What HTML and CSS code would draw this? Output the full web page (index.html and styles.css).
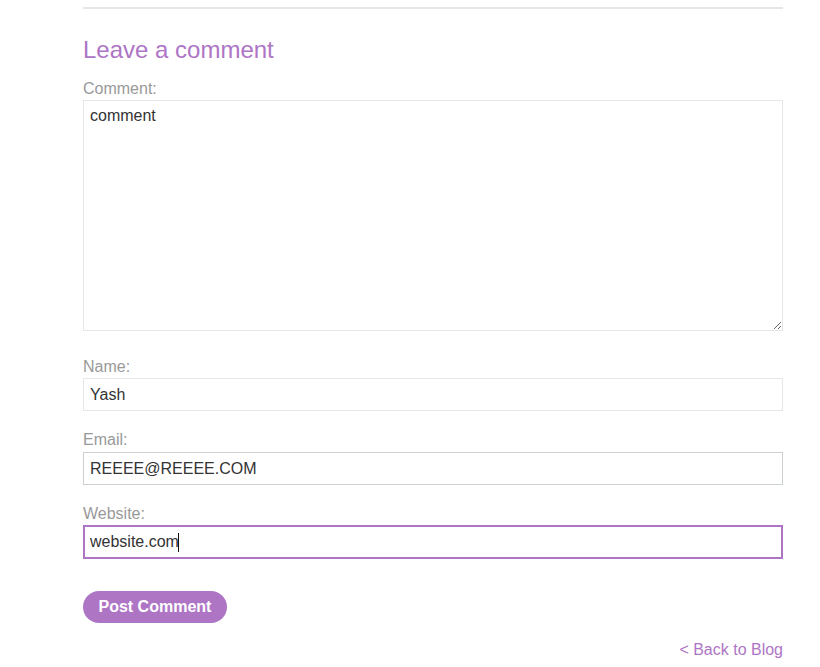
FILE: index.html
```html
<!DOCTYPE html>
<html lang="en">
<head>
   <meta charset="UTF-8">
   <meta name="viewport" content="width=device-width, initial-scale=1.0">
   <title>Leave a comment</title>
   <link rel="stylesheet" href="styles.css">
</head>
<body>
   <div class="container">
       <hr class="divider">
       <section class="add-comment">
           <h2>Leave a comment</h2>
           <form action="/post/comment" method="POST">
               <div class="field field-area">
                   <label for="comment">Comment:</label>
                   <textarea id="comment" name="comment" required>comment</textarea>
               </div>
               <div class="field">
                   <label for="name">Name:</label>
                   <input id="name" name="name" type="text" value="Yash" required>
               </div>
               <div class="field">
                   <label for="email">Email:</label>
                   <input id="email" name="email" type="email" class="hovered" value="REEEE@REEEE.COM" required>
               </div>
               <div class="field field-last">
                   <label for="website">Website:</label>
                   <div class="input-wrap">
                       <input id="website" name="website" type="text" class="focused" value="website.com">
                       <span class="caret"></span>
                   </div>
               </div>
               <button class="button" type="submit">Post Comment</button>
           </form>
       </section>
       <div class="back-link">
           <a href="/">&lt; Back to Blog</a>
       </div>
   </div>
</body>
</html>
```

FILE: styles.css
```css
body {
    font-family: "Liberation Sans", Arial, sans-serif;
    font-size: 16px;
    margin: 0;
    background: #fff;
    color: #333;
}

.container {
    width: 700px;
    padding: 7px 0 0 83px;
}

.divider {
    border: none;
    height: 2px;
    background-color: #e6e6e6;
    margin: 0;
}

.add-comment h2 {
    color: #ae75c5;
    font-size: 24px;
    font-weight: normal;
    line-height: 28px;
    margin: 27px 0 15px 0;
}

.field {
    display: flex;
    flex-direction: column;
    margin-bottom: 19px;
}

.field-area {
    margin-bottom: 26px;
}

.field-last {
    margin-bottom: 32px;
}

label {
    color: #999;
    line-height: 18px;
    padding-top: 1px;
    margin-bottom: 2px;
}

textarea,
input {
    font-family: "Liberation Sans", Arial, sans-serif;
    font-size: 16px;
    color: #333;
    border: 1px solid #e6e6e6;
    box-sizing: border-box;
    width: 700px;
    margin: 0;
    outline: none;
}

textarea {
    height: 231px;
    padding: 6px 6px 4px 6px;
    line-height: normal;
}

input {
    height: 33px;
    padding: 0 6px;
}

input.hovered {
    border-color: #cbd0d1;
    margin-top: 1px;
}

.input-wrap {
    position: relative;
}

input.focused {
    border: 2px solid #ae75c5;
    height: 34px;
    padding: 0 5px;
    display: block;
}

.caret {
    position: absolute;
    left: 95px;
    top: 8px;
    width: 1px;
    height: 19px;
    background-color: #111;
}

.button {
    display: block;
    background-color: #ae75c5;
    color: #fff;
    border: none;
    border-radius: 16px;
    font-family: "Liberation Sans", Arial, sans-serif;
    font-size: 16px;
    font-weight: bold;
    height: 32px;
    padding: 0 15.5px;
    cursor: pointer;
}

.back-link {
    text-align: right;
    line-height: 18px;
    margin-top: 18px;
}

.back-link a {
    color: #ae75c5;
    text-decoration: none;
}
```
